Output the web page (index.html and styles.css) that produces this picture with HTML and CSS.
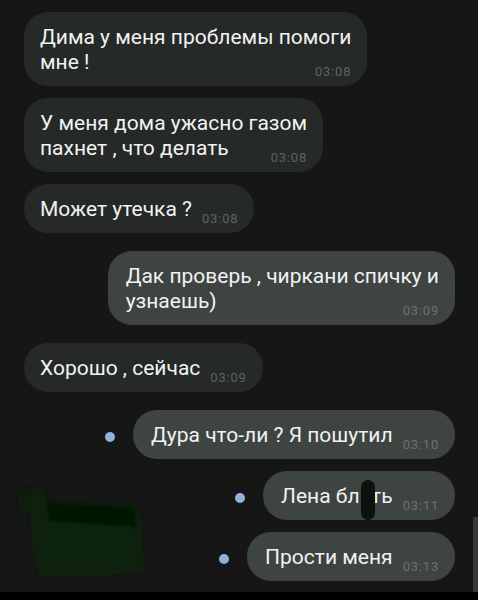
FILE: index.html
```html
<!DOCTYPE html>
<html lang="ru">
<head>
    <meta charset="UTF-8">
    <meta name="viewport" content="width=device-width, initial-scale=1.0">
    <title>Чат</title>
    <link rel="stylesheet" href="styles.css">
</head>
<body>
    <div class="chat">
        <div class="bubble in">Дима у меня проблемы помоги<br>мне !<span class="time">03:08</span></div>
        <div class="bubble in">У меня дома ужасно газом<br>пахнет , что делать<span class="time">03:08</span></div>
        <div class="bubble in">Может утечка ?<span class="time">03:08</span></div>

        <div class="bubble out switch">Дак проверь , чиркани спичку и<br>узнаешь)<span class="time">03:09</span></div>

        <div class="bubble in switch">Хорошо , сейчас<span class="time">03:09</span></div>

        <div class="sent switch">
            <span class="dot"></span>
            <div class="bubble out">Дура что-ли ? Я пошутил<span class="time">03:10</span></div>
        </div>
        <div class="sent">
            <span class="dot"></span>
            <div class="bubble out">Лена бл<span class="hide">я</span>ть<span class="time">03:11</span></div>
        </div>
        <div class="sent">
            <span class="dot"></span>
            <div class="bubble out">Прости меня<span class="time">03:13</span></div>
        </div>

        <!-- закраска и полоса прокрутки -->
        <svg class="scribble" width="150" height="110" viewBox="0 0 150 110">
            <defs>
                <filter id="soft"><feGaussianBlur stdDeviation="2"/></filter>
            </defs>
            <g filter="url(#soft)">
                <polygon points="8,15 30,11 34,30 28,40 10,38" fill="#0e1e0e"/>
                <polygon points="20,22 32,14 37,27 124,31 131,45 134,96 95,101 30,101 22,70" fill="#0a210a"/>
                <polygon points="36,28 124,34 126,52 40,46" fill="#061506"/>
            </g>
        </svg>
        <div class="scrollbar"></div>
    </div>
</body>
</html>
```

FILE: styles.css
```css
body {
    margin: 0;
    background-color: #000;
    font-family: Roboto, "Noto Sans", sans-serif;
}
.chat {
    position: relative;
    height: 592px;
    box-sizing: border-box;
    padding: 12px 23px 0 24px;
    background-color: #161616;
    display: flex;
    flex-direction: column;
    gap: 12px;
    overflow: hidden;
}
.bubble {
    font-size: 21px;
    line-height: 25px;
    color: #f2f2f2;
    padding: 13px 16px 7px 16px;
    border-radius: 24px;
}
.bubble.in {
    align-self: flex-start;
    background-color: #252928;
}
.bubble.out {
    background-color: #3e4442;
    padding-left: 18px;
}
.chat > .bubble.out {
    align-self: flex-end;
}
.switch {
    margin-top: 6px;
}
.time {
    float: right;
    margin: 15px 0 0 10px;
    font-size: 13px;
    line-height: 14px;
    color: #5d6462;
    letter-spacing: 0.8px;
}
.out .time {
    color: #6a716f;
}
.sent {
    align-self: flex-end;
    display: flex;
    align-items: center;
    gap: 18px;
}
.dot {
    width: 10px;
    height: 10px;
    margin-top: 5px;
    border-radius: 50%;
    background-color: #8eb2dc;
}
.hide {
    position: relative;
    color: transparent;
}
.hide::after {
    content: "";
    position: absolute;
    left: 1px;
    right: -4px;
    top: -4px;
    bottom: -12px;
    border-radius: 8px;
    background-color: #0b130c;
}
.scribble {
    position: absolute;
    left: 10px;
    top: 475px;
}
.scrollbar {
    position: absolute;
    right: 0;
    top: 517px;
    width: 5px;
    height: 75px;
    background-color: #383838;
}
```
